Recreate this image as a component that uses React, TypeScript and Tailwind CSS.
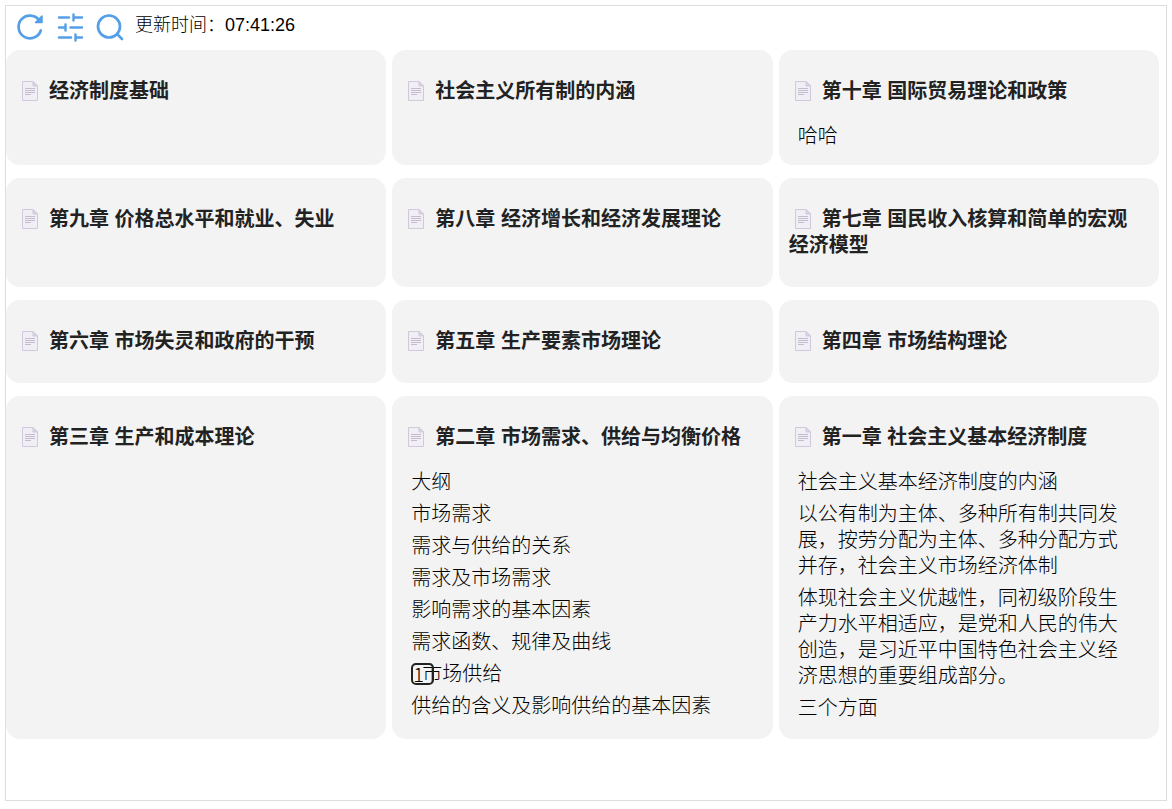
import type { ReactNode } from 'react';

type Item = { text: string; badge?: string };
type Chapter = { title: string; items?: Item[] };

const chapters: Chapter[] = [
    { title: '经济制度基础' },
    { title: '社会主义所有制的内涵' },
    { title: '第十章 国际贸易理论和政策', items: [{ text: '哈哈' }] },
    { title: '第九章 价格总水平和就业、失业' },
    { title: '第八章 经济增长和经济发展理论' },
    { title: '第七章 国民收入核算和简单的宏观经济模型' },
    { title: '第六章 市场失灵和政府的干预' },
    { title: '第五章 生产要素市场理论' },
    { title: '第四章 市场结构理论' },
    { title: '第三章 生产和成本理论' },
    {
        title: '第二章 市场需求、供给与均衡价格',
        items: [
            { text: '大纲' },
            { text: '市场需求' },
            { text: '需求与供给的关系' },
            { text: '需求及市场需求' },
            { text: '影响需求的基本因素' },
            { text: '需求函数、规律及曲线' },
            { text: '市场供给', badge: '1' },
            { text: '供给的含义及影响供给的基本因素' },
        ],
    },
    {
        title: '第一章 社会主义基本经济制度',
        items: [
            { text: '社会主义基本经济制度的内涵' },
            { text: '以公有制为主体、多种所有制共同发展，按劳分配为主体、多种分配方式并存，社会主义市场经济体制' },
            { text: '体现社会主义优越性，同初级阶段生产力水平相适应，是党和人民的伟大创造，是习近平中国特色社会主义经济思想的重要组成部分。' },
            { text: '三个方面' },
        ],
    },
];

function ToolButton({ label, children }: { label: string; children: ReactNode }) {
    return (
        <button type="button" aria-label={label} className="size-[30px] text-[#549fe8]">
            <svg viewBox="0 0 30 30" className="size-full" fill="none" stroke="currentColor" strokeWidth="2.7" strokeLinecap="round" strokeLinejoin="round">
                {children}
            </svg>
        </button>
    );
}

function DocIcon() {
    return (
        <svg viewBox="0 0 16 20" className="mr-[11px] ml-[6px] inline-block h-5 w-4 align-[-3px]" fill="none">
            <path d="M.5.5H11L15.5 5V19.5H.5Z" fill="#f1eef6" stroke="#d0c9da" />
            <path d="M11 .5V5H15.5Z" fill="#d9d2e3" stroke="#d0c9da" strokeLinejoin="round" />
            <path d="M3 7.5H13M3 9.5H13M3 11.5H13M3 13.5H9" stroke="#c3bccd" />
        </svg>
    );
}

function ChapterCard({ title, items }: Chapter) {
    return (
        <section className="rounded-[14px] bg-[#f3f3f3] pt-7 pr-4 pl-[10px]">
            <h2 className={items ? 'font-bold' : 'pb-[29px] font-bold'}>
                <DocIcon />
                {title}
            </h2>
            {items && (
                <ul className="mt-[19px] flex flex-col gap-[6px] pr-4 pb-4 pl-[9px] font-light text-black">
                    {items.map((item) => (
                        <li key={item.text} className="relative">
                            {item.badge && (
                                <span className="absolute top-[2px] left-0 h-[22px] w-[23px] rounded-[5px] border-2 border-[#222] font-['Noto_Sans_CJK_SC',sans-serif] leading-[18px]">
                                    {item.badge}
                                </span>
                            )}
                            <span className={item.badge ? 'pl-[11px]' : ''}>{item.text}</span>
                        </li>
                    ))}
                </ul>
            )}
        </section>
    );
}

export default function App() {
    return (
        <div className="h-screen bg-white pt-[5px] pr-[5px] pb-2 pl-[5px] font-['Liberation_Sans','Noto_Sans_CJK_SC',sans-serif] text-[#222]">
            <main className="h-full overflow-auto border border-[#dedede]">
                <header className="flex h-11 items-center gap-[10px] pb-[2px] pl-[9px]">
                    <ToolButton label="刷新">
                        <path d="M25.800 18.500A11.400 11.400 0 1 1 24 8" />
                        <path d="M27 4V10.500H20.500Z" fill="currentColor" strokeWidth="1.5" />
                    </ToolButton>
                    <ToolButton label="设置">
                        <path d="M4 5.500H14M18.500 5.500H27M18.500 2.500V8.500M4 15.500H10M10.500 12.500V18.500M15.500 15.500H27M4 25.500H16M20.500 25.500H27M20.500 22.500V28.500" strokeWidth="2.4" />
                    </ToolButton>
                    <ToolButton label="搜索">
                        <circle cx="14" cy="14.500" r="11" />
                        <path d="M22.500 22.500L27 27" />
                    </ToolButton>
                    <p className="pb-1 text-[18px] leading-6 font-light text-black">更新时间：07:41:26</p>
                </header>
                <div className="grid grid-cols-3 grid-rows-[auto_auto_auto_minmax(343px,auto)] gap-x-[6px] gap-y-[13px] pr-[7px] text-[20px] leading-[26px]">
                    {chapters.map((chapter) => (
                        <ChapterCard key={chapter.title} {...chapter} />
                    ))}
                </div>
            </main>
        </div>
    );
}
